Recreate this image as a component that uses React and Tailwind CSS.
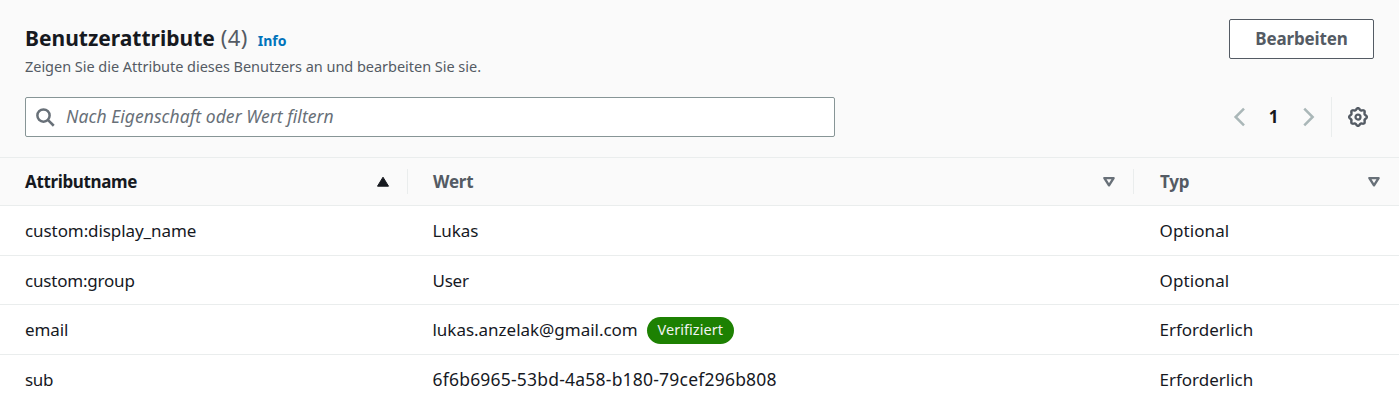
const ROWS = [
  { name: "custom:display_name", nameClass: "tracking-[-0.08px]", value: "Lukas", valueClass: "tracking-[-0.1px]", type: "Optional", typeClass: "tracking-[0.1px]", height: "h-[50px]" },
  { name: "custom:group", nameClass: "tracking-[-0.2px]", value: "User", valueClass: "tracking-[-0.25px]", type: "Optional", typeClass: "tracking-[0.1px]", height: "h-[49px]", offset: "pt-px" },
  { name: "email", nameClass: "tracking-[-0.1px]", value: "lukas.anzelak@gmail.com", valueClass: "tracking-[-0.02px]", type: "Erforderlich", typeClass: "", height: "h-[50px]", badge: "Verifiziert" },
  { name: "sub", nameClass: "tracking-[-0.3px]", value: "6f6b6965-53bd-4a58-b180-79cef296b808", valueClass: "pb-0.5 text-[17.5px] tracking-[0.21px]", type: "Erforderlich", typeClass: "", height: "h-[50px]" },
];

const GRID = "grid grid-cols-[408px_726px_265px]";

function SearchIcon() {
  return (
    <svg className="size-5 shrink-0" viewBox="0 0 16 16" fill="none" stroke="#687078" strokeWidth="2">
      <circle cx="6.8" cy="6.8" r="4.9" />
      <path d="M15 15 10.3 10.3" />
    </svg>
  );
}

function Chevron({ d }) {
  return (
    <svg className="size-5 shrink-0" viewBox="0 0 16 16" fill="none" stroke="#aab7b8" strokeWidth="2">
      <path d={d} />
    </svg>
  );
}

function GearIcon() {
  const teeth = 8;
  const points = [];
  for (let i = 0; i < 96; i++) {
    const a = (i / 96) * Math.PI * 2;
    const r = 6.4 + 0.7 * Math.cos(teeth * a);
    points.push(`${(8 + r * Math.cos(a)).toFixed(2)},${(8 + r * Math.sin(a)).toFixed(2)}`);
  }
  return (
    <svg className="size-5 shrink-0" viewBox="0 0 16 16" fill="none" stroke="#545b64">
      <polygon points={points.join(" ")} strokeWidth="1.9" strokeLinejoin="round" />
      <circle cx="8" cy="8" r="2" strokeWidth="1.8" />
    </svg>
  );
}

function SortAscending() {
  return (
    <svg className="h-[11px] w-[13px] shrink-0" viewBox="0 0 13 11">
      <path d="M6 1.2 11.5 10.2H.5Z" fill="#16191f" stroke="#16191f" strokeWidth="1" strokeLinejoin="round" />
    </svg>
  );
}

function SortNone() {
  return (
    <svg className="h-[11px] w-[13px] shrink-0" viewBox="0 0 13 11">
      <path d="M1.4 2.1h9.2L6 9.3Z" fill="none" stroke="#687078" strokeWidth="2.4" strokeLinejoin="round" />
    </svg>
  );
}

export default function App() {
  return (
    <div className="h-[405px] w-[1399px] overflow-hidden bg-white font-['Noto_Sans',sans-serif] text-[17px] text-[#16191f]">
      <header className="h-[157px] bg-[#fafafa] px-[25px] pt-[19px]">
        <div className="flex h-[78px] items-start justify-between">
          <div>
            <div className="flex h-[37px] items-baseline leading-[36px]">
              <h2 className="text-[21px] font-bold">Benutzerattribute</h2>
              <span className="ml-[6px] text-[22px] tracking-[0.4px] text-[#545b64]">(4)</span>
              <a className="ml-[10px] text-[14px] font-bold text-[#0073bb]">Info</a>
            </div>
            <p className="text-[14.5px] leading-[20px] tracking-[-0.03px] text-[#545b64]">
              Zeigen Sie die Attribute dieses Benutzers an und bearbeiten Sie sie.
            </p>
          </div>
          <button className="h-10 w-[145px] rounded-[2px] border border-[#545b64] bg-white font-bold tracking-[-0.15px] text-[#545b64]">
            Bearbeiten
          </button>
        </div>
        <div className="flex h-10 items-center justify-between">
          <div className="flex h-10 w-[810px] items-center gap-[11px] rounded-[2px] border border-[#879596] bg-white pl-[9px]">
            <SearchIcon />
            <span className="pb-0.5 text-[17.5px] leading-6 tracking-[0.05px] text-[#687078] italic">Nach Eigenschaft oder Wert filtern</span>
          </div>
          <div className="flex h-10 items-center pr-[6px]">
            <Chevron d="M12 1.3 5.3 8l6.7 6.7" />
            <span className="w-[49px] text-center font-bold">1</span>
            <Chevron d="m5 1.3 6.7 6.7L5 14.7" />
            <span className="mr-[16px] ml-[13px] h-10 w-px bg-[#eaeded]" />
            <GearIcon />
          </div>
        </div>
      </header>

      <div className={`${GRID} h-[49px] items-center border-y border-[#eaeded] bg-[#fafafa] font-bold text-[#545b64]`}>
        <div className="flex h-[25px] items-center justify-between border-r border-[#eaeded] pr-[17px] pl-[25px]">
          <span className="tracking-[-0.36px] text-[#16191f]">Attributname</span>
          <SortAscending />
        </div>
        <div className="flex h-[25px] items-center justify-between border-r border-[#eaeded] pr-[17px] pl-[25px]">
          <span className="tracking-[-0.2px]">Wert</span>
          <SortNone />
        </div>
        <div className="flex h-[25px] items-center justify-between pr-[18px] pl-[26px]">
          <span className="tracking-[-0.2px]">Typ</span>
          <SortNone />
        </div>
      </div>

      {ROWS.map((row) => (
        <div key={row.name} className={`${GRID} ${row.height} ${row.offset ?? ""} items-center border-b border-[#eaeded] last:border-b-0`}>
          <span className={`pl-[25px] ${row.nameClass}`}>{row.name}</span>
          <div className="flex items-center gap-[9px] pl-[24.5px]">
            <span className={row.valueClass}>{row.value}</span>
            {row.badge && (
              <span className="mt-px flex h-[27px] w-[87px] items-center justify-center rounded-full bg-[#1d8102] text-[14.5px] tracking-[0.05px] text-[#f2f3f3]">
                {row.badge}
              </span>
            )}
          </div>
          <span className={`pl-[25.5px] ${row.typeClass}`}>{row.type}</span>
        </div>
      ))}
    </div>
  );
}
